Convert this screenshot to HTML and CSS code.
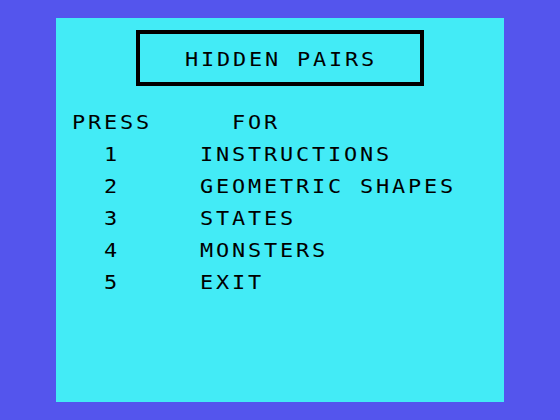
FILE: index.html
```html
<!DOCTYPE html>
<html lang="en">
<head>
    <meta charset="UTF-8">
    <title>hidden pairs</title>
    <link rel="stylesheet" href="styles.css">
</head>

<body>
    <div class="screen">
        <div class="title-box">
            <span class="txt">HIDDEN PAIRS</span>
        </div>

        <div class="menu">
            <div class="line head">
                <span class="key"><span class="txt">PRESS</span></span>
                <span class="txt">FOR</span>
            </div>
            <div class="line item"><span class="key"><span class="txt">1</span></span><span class="txt">INSTRUCTIONS</span></div>
            <div class="line item"><span class="key"><span class="txt">2</span></span><span class="txt">GEOMETRIC SHAPES</span></div>
            <div class="line item"><span class="key"><span class="txt">3</span></span><span class="txt">STATES</span></div>
            <div class="line item"><span class="key"><span class="txt">4</span></span><span class="txt">MONSTERS</span></div>
            <div class="line item"><span class="key"><span class="txt">5</span></span><span class="txt">EXIT</span></div>
        </div>
    </div>
</body>
</html>
```

FILE: styles.css
```css
body {
    margin: 0;
    background-color: #5455ed;
    overflow: hidden;
}

.screen {
    width: 448px;
    height: 384px;
    margin: 18px 0 0 56px;
    background-color: #43ebf6;
    color: #000;
    font-family: "DejaVu Sans Mono", monospace;
    font-size: 19px;
    overflow: hidden;
}

/* chunky 16px character cells */
.txt {
    display: inline-block;
    letter-spacing: 2.47px;
    white-space: pre;
    transform: scaleX(1.15);
    transform-origin: left center;
}

.title-box {
    box-sizing: border-box;
    width: 288px;
    height: 56px;
    margin: 12px 0 0 80px;
    border: 4px solid #000;
    display: flex;
    align-items: center;
    padding-left: 45px;
    padding-top: 1px;
}

.menu {
    margin-top: 20px;
    padding-left: 16px;
}

.line {
    display: flex;
    height: 32px;
    line-height: 32px;
    white-space: pre;
}

.key {
    flex-shrink: 0;
}

.head .key {
    width: 160px;
}

.item {
    padding-left: 32px;
}

.item .key {
    width: 96px;
}
```
